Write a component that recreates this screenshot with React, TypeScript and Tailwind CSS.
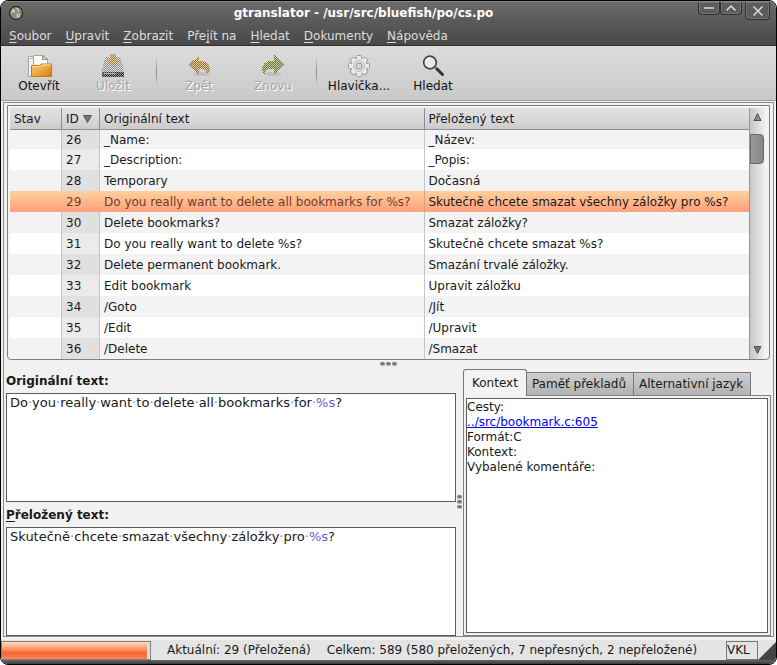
import { useId, useState, type ReactNode } from 'react';

const menus: [string, string, string][] = [
  ['', 'S', 'oubor'],
  ['', 'U', 'pravit'],
  ['', 'Z', 'obrazit'],
  ['Pře', 'j', 'ít na'],
  ['', 'H', 'ledat'],
  ['', 'D', 'okumenty'],
  ['', 'N', 'ápověda'],
];

const rows = [
  { id: 26, source: '_Name:', target: '_Název:' },
  { id: 27, source: '_Description:', target: '_Popis:' },
  { id: 28, source: 'Temporary', target: 'Dočasná' },
  {
    id: 29,
    source: 'Do you really want to delete all bookmarks for %s?',
    target: 'Skutečně chcete smazat všechny záložky pro %s?',
  },
  { id: 30, source: 'Delete bookmarks?', target: 'Smazat záložky?' },
  { id: 31, source: 'Do you really want to delete %s?', target: 'Skutečně chcete smazat %s?' },
  { id: 32, source: 'Delete permanent bookmark.', target: 'Smazání trvalé záložky.' },
  { id: 33, source: 'Edit bookmark', target: 'Upravit záložku' },
  { id: 34, source: '/Goto', target: '/Jít' },
  { id: 35, source: '/Edit', target: '/Upravit' },
  { id: 36, source: '/Delete', target: '/Smazat' },
];

function AppIcon() {
  return (
    <svg viewBox="0 0 16 16" className="size-4" aria-hidden="true">
      <circle cx="8" cy="8" r="6.6" fill="#6f7f6a" stroke="#2c2f28" strokeWidth="1.2" />
      <circle cx="8" cy="8" r="5.4" fill="#84957e" />
      <path d="M3.600 8 5.200 4l1.800 3.600M4.400 6.600h2.200" fill="none" stroke="#d5dccf" />
      <path d="M8.200 3.800h2.200v2.800M9.200 9.200h2.400M9.200 9v3h2.200v-1.600" fill="none" stroke="#d5dccf" />
    </svg>
  );
}

function OpenIcon() {
  return (
    <svg viewBox="0 0 26 24" className="h-6 w-[26px]" aria-hidden="true">
      <defs>
        <linearGradient id="folder" x1="0" y1="0" x2="1" y2="1">
          <stop offset="0" stopColor="#f7c777" />
          <stop offset="0.4" stopColor="#f0b04a" />
          <stop offset="1" stopColor="#d9760c" />
        </linearGradient>
      </defs>
      <path d="M2.500 2.500h7v20h-7z" fill="#f2f2f2" stroke="#a6a6a6" />
      <path d="M4 4.500h3" stroke="#efab50" />
      <path d="M7.500 1.500h9l5 4v9h-14z" fill="#fbfbfb" stroke="#a6a6a6" />
      <path d="M16.500 1.500v4h5z" fill="#e2e2e2" stroke="#8f8f8f" />
      <path d="M5.500 11.500h8l1.500-1.500h10.500v12.500h-20z" fill="url(#folder)" stroke="#cf7612" />
      <path d="M6 12.500h8l1.500-1.500H25" fill="none" stroke="#fbdf9e" />
    </svg>
  );
}

function SaveIcon() {
  return (
    <svg viewBox="0 0 24 24" className="size-6" shapeRendering="crispEdges" aria-hidden="true">
      <defs>
        <pattern id="dither-grey" width="2" height="2" patternUnits="userSpaceOnUse">
          <rect width="2" height="2" fill="#e0e0e0" />
          <path d="M0 0h1v1H0zM1 1h1v1H1z" fill="#8c8c8c" />
        </pattern>
        <pattern id="dither-dark" width="2" height="2" patternUnits="userSpaceOnUse">
          <rect width="2" height="2" fill="#9a9a9a" />
          <path d="M0 0h1v1H0zM1 1h1v1H1z" fill="#2b2b2b" />
        </pattern>
        <pattern id="dither-gold" width="2" height="2" patternUnits="userSpaceOnUse">
          <rect width="2" height="2" fill="#dcd5c2" />
          <path d="M0 0h1v1H0zM1 1h1v1H1z" fill="#a87a2a" />
        </pattern>
      </defs>
      <path d="M5 3h14l2 5 2 9v6H1v-6l2-9z" fill="url(#dither-grey)" />
      <path d="M1 18h22v5H1z" fill="url(#dither-dark)" />
      <path d="M3 19h11v1H3z" fill="#b5b5b5" />
      <path d="M9 0h6v6h4l-7 7-7-7h4z" fill="url(#dither-gold)" />
    </svg>
  );
}

function UndoIcon() {
  return (
    <svg viewBox="0 0 24 24" className="size-6" shapeRendering="crispEdges" aria-hidden="true">
      <defs>
        <pattern id="dither-undo" width="2" height="2" patternUnits="userSpaceOnUse">
          <rect width="2" height="2" fill="#d9cfae" />
          <path d="M0 0h1v1H0zM1 1h1v1H1z" fill="#95702a" />
        </pattern>
      </defs>
      <ellipse cx="15" cy="20" rx="8" ry="2.500" fill="#c0c0c0" />
      <path d="M1 11 12 2v5h3c5 0 8 4 8 9l-3 5c0-4-2-6-5-6h-3v5z" fill="url(#dither-undo)" />
    </svg>
  );
}

function RedoIcon() {
  return (
    <svg viewBox="0 0 24 24" className="size-6" shapeRendering="crispEdges" aria-hidden="true">
      <defs>
        <pattern id="dither-redo" width="2" height="2" patternUnits="userSpaceOnUse">
          <rect width="2" height="2" fill="#c9d1a8" />
          <path d="M0 0h1v1H0zM1 1h1v1H1z" fill="#667337" />
        </pattern>
      </defs>
      <ellipse cx="12" cy="20" rx="8" ry="2.500" fill="#c0c0c0" />
      <path d="M23 10 13 1v6H9c-5 0-8 4-8 9l3 5c0-4 2-6 5-6h4v5z" fill="url(#dither-redo)" />
    </svg>
  );
}

function GearIcon() {
  const teeth = [0, 45, 90, 135, 180, 225, 270, 315];
  return (
    <svg viewBox="0 0 24 24" className="size-6" aria-hidden="true">
      {teeth.map((angle) => (
        <rect
          key={angle}
          x="9.500"
          y="1.500"
          width="5"
          height="6"
          rx="1"
          fill="#ebebeb"
          stroke="#9a9a9a"
          transform={`rotate(${angle} 12 12)`}
        />
      ))}
      <circle cx="12" cy="12" r="8.300" fill="#e6e6e6" stroke="#a0a0a0" />
      {teeth.map((angle) => (
        <rect
          key={angle}
          x="10"
          y="2.500"
          width="4"
          height="4"
          fill="#ebebeb"
          transform={`rotate(${angle} 12 12)`}
        />
      ))}
      <circle cx="12" cy="12" r="5.500" fill="#dcdcdc" stroke="#c0c0c0" />
      <circle cx="12" cy="12" r="3" fill="#d6d6d6" stroke="#9a9a9a" />
    </svg>
  );
}

function SearchIcon() {
  return (
    <svg viewBox="0 0 24 24" className="size-6" aria-hidden="true">
      <path d="M14 13l3 3" stroke="#777" strokeWidth="2" />
      <path d="M16 15l5.500 5.500" stroke="#333" strokeWidth="3" strokeLinecap="round" />
      <circle cx="9" cy="8.500" r="6.300" fill="#e4e8ea" stroke="#444" strokeWidth="1.700" />
      <path d="M5 8a4 4 0 0 1 4-4" fill="none" stroke="#fff" strokeWidth="1.500" />
    </svg>
  );
}

function ToolButton({ label, disabled, children }: { label: string; disabled?: boolean; children: ReactNode }) {
  return (
    <button
      type="button"
      disabled={disabled}
      className="flex w-[74px] flex-col items-center whitespace-nowrap pt-2 leading-4 text-[#111] disabled:text-[#a5a5a5] disabled:[text-shadow:1px_1px_0_#fff]"
    >
      {children}
      {label}
    </button>
  );
}

function ToolSeparator() {
  return (
    <div className="flex w-3 justify-center pt-3">
      <div className="h-7 w-px bg-linear-to-b from-[#ccc] via-[#888] to-[#ccc]" />
    </div>
  );
}

function Highlighted({ text }: { text: string }) {
  return text.split(/( |%s)/).map((part, i) => {
    if (part === ' ') return <span key={i} className="text-[#888]">·</span>;
    if (part === '%s') return <span key={i} className="text-[#6a5acd]">%s</span>;
    return <span key={i}>{part}</span>;
  });
}

function Editor({ label, initial, className }: { label: ReactNode; initial: string; className: string }) {
  const [text, setText] = useState(initial);
  const id = useId();
  return (
    <div className={`flex flex-col ${className}`}>
      <label htmlFor={id} className="flex h-[25px] items-center font-bold">
        <span>{label}</span>
      </label>
      <div className="grid grow border border-[#5c5c5c] bg-white text-[13px] leading-4">
        <div aria-hidden="true" className="col-start-1 row-start-1 whitespace-pre-wrap px-[3px] pt-px">
          <Highlighted text={text} />
        </div>
        <textarea
          id={id}
          value={text}
          onChange={(e) => setText(e.target.value)}
          spellCheck={false}
          className="col-start-1 row-start-1 resize-none bg-transparent px-[3px] pt-px text-transparent caret-black outline-none"
        />
      </div>
    </div>
  );
}

function Grip({ vertical }: { vertical?: boolean }) {
  return (
    <div className={`flex items-center justify-center gap-px ${vertical ? 'w-[7px] flex-col' : 'h-2'}`}>
      {[0, 1, 2].map((n) => (
        <span key={n} className="h-1 w-[5px] rounded-full border-b border-[#bbb] bg-[#777]" />
      ))}
    </div>
  );
}

function WindowButton({ label, path, className }: { label: string; path: string; className: string }) {
  return (
    <button
      type="button"
      aria-label={label}
      className={`flex items-center justify-center rounded-b border border-t-0 border-[#2e2e2e] bg-[#5c5c5c] shadow-[inset_0_0_0_1px_#747474] ${className}`}
    >
      <svg viewBox="0 0 12 12" className="size-3" aria-hidden="true">
        <path d={path} fill="none" stroke="#d8d8d8" strokeWidth="1.600" />
      </svg>
    </button>
  );
}

export default function App() {
  const [selected, setSelected] = useState(29);
  const [tab, setTab] = useState('Kontext');
  return (
    <div className="flex min-h-screen flex-col bg-white font-['DejaVu_Sans',sans-serif] text-xs text-[#1a1a1a]">
      <div className="flex grow flex-col overflow-hidden rounded-lg border border-black bg-[#f1f1f1]">
        <header className="border-b border-[#303030] bg-linear-to-b from-[#6b6b6b] to-[#484848] text-[#ddd]">
          <div className="flex h-6 items-start border-t border-[#858585]">
            <div className="flex w-7 items-center pt-[3px] pl-[7px]">
              <AppIcon />
            </div>
            <h1 className="grow pt-[3px] text-center font-bold leading-4 text-white">
              gtranslator - /usr/src/bluefish/po/cs.po
            </h1>
            <div className="flex w-[78px] items-start">
              <WindowButton label="Minimalizovat" path="M1 6h10" className="h-[13px] w-[22px]" />
              <WindowButton label="Maximalizovat" path="M1.500 8.500 6 4l4.500 4.500" className="h-[13px] w-[22px]" />
              <WindowButton label="Zavřít" path="M1.500 1.500l9 9M10.500 1.500l-9 9" className="ml-[3px] h-[18px] w-[25px]" />
            </div>
          </div>
          <nav className="flex h-5 gap-[14px] pt-px pl-2">
            {menus.map(([before, key, after]) => (
              <button key={key} type="button" className="whitespace-nowrap leading-5">
                {before}
                <span className="underline underline-offset-2">{key}</span>
                {after}
              </button>
            ))}
          </nav>
        </header>

        <div className="flex h-[55px] border-b border-[#9a9a9a] bg-linear-to-b from-[#dcdcdc] to-[#c9c9c9] pl-px">
          <ToolButton label="Otevřít"><OpenIcon /></ToolButton>
          <ToolButton label="Uložit" disabled><SaveIcon /></ToolButton>
          <ToolSeparator />
          <ToolButton label="Zpět" disabled><UndoIcon /></ToolButton>
          <ToolButton label="Znovu" disabled><RedoIcon /></ToolButton>
          <ToolSeparator />
          <ToolButton label="Hlavička..."><GearIcon /></ToolButton>
          <ToolButton label="Hledat"><SearchIcon /></ToolButton>
        </div>

        <main className="mx-[2px] mt-px mb-[3px] flex grow flex-col border border-[#8a8a8a] bg-[#f1f1f1]">
          <div className="mx-[3px] mt-[2px] flex rounded-b border border-[#808080] bg-[#f3f3f3] pt-[2px] pr-1 pl-[2px]">
            <table className="w-full table-fixed border-separate border-spacing-0">
              <colgroup>
                <col className="w-[52px]" />
                <col className="w-[38px]" />
                <col />
                <col />
              </colgroup>
              <thead>
                <tr className="h-[22px] bg-linear-to-b from-[#e2e2e2] via-[#d9d9d9] to-[#cacaca] text-left">
                  <th className="border-r border-b border-[#8f8f8f] px-1 pt-px pb-0 font-normal">Stav</th>
                  <th className="border-r border-b border-[#8f8f8f] pt-px pb-0 pl-1 font-normal">
                    <span className="flex items-center gap-1">
                      ID
                      <svg viewBox="0 0 9 8" className="h-2 w-[9px]" aria-hidden="true">
                        <path d="M.5.5h8L4.500 7.500z" fill="#777" stroke="#555" />
                      </svg>
                    </span>
                  </th>
                  <th className="border-r border-b border-[#8f8f8f] px-1 pt-px pb-0 font-normal">Originální text</th>
                  <th className="border-b border-[#8f8f8f] px-1 pt-px pb-0 font-normal">Přeložený text</th>
                </tr>
              </thead>
              <tbody>
                {rows.map((row) => {
                  const active = row.id === selected;
                  return (
                    <tr
                      key={row.id}
                      onClick={() => setSelected(row.id)}
                      className={`h-[21px] whitespace-nowrap first:h-[19px] ${
                        active
                          ? 'bg-linear-to-b from-[#ffd09c] to-[#ff9f7c]'
                          : 'bg-white odd:bg-[#f3f3f3]'
                      }`}
                    >
                      <td className={`border-r p-0 ${active ? 'border-transparent' : 'border-[#c4c4c4]'}`} />
                      <td
                        className={`border-r py-0 px-1 ${
                          active ? 'border-transparent text-[#6b4030]' : 'border-[#c4c4c4] bg-black/8'
                        }`}
                      >
                        {row.id}
                      </td>
                      <td
                        className={`border-r py-0 px-1 ${
                          active ? 'border-[#e0a080] text-[#6b4030]' : 'border-[#c4c4c4]'
                        }`}
                      >
                        {row.source}
                      </td>
                      <td className="py-0 px-1">{row.target}</td>
                    </tr>
                  );
                })}
              </tbody>
            </table>
            <div className="flex w-4 shrink-0 flex-col items-center border-l border-[#999] bg-linear-to-r from-[#c6c6c6] to-[#f0f0f0]">
              <svg viewBox="0 0 9 8" className="mt-[5px] h-2 w-[9px]" aria-hidden="true">
                <path d="M4.500.5l3.500 7H1z" fill="#888" stroke="#555" />
              </svg>
              <div className="mt-[13px] mr-px h-[30px] w-[14px] rounded-r-sm border border-[#6a6a6a] bg-linear-to-r from-[#999] to-[#868686]" />
              <svg viewBox="0 0 9 8" className="mt-auto mb-[5px] h-2 w-[9px]" aria-hidden="true">
                <path d="M1 .5h7l-3.500 7z" fill="#777" stroke="#555" />
              </svg>
            </div>
          </div>

          <Grip />

          <div className="flex grow pl-[2px]">
            <div className="flex grow basis-0 flex-col">
              <Editor label="Originální text:" initial={rows[3].source} className="h-[134px]" />
              <Editor
                label={<><span className="underline underline-offset-2">P</span>řeložený text:</>}
                initial={rows[3].target}
                className="grow"
              />
            </div>
            <Grip vertical />
            <section className="mr-[2px] flex w-[308px] flex-col">
              <div role="tablist" className="flex h-[27px] items-end">
                {['Kontext', 'Paměť překladů', 'Alternativní jazyk'].map((name) => (
                  <button
                    key={name}
                    type="button"
                    role="tab"
                    aria-selected={tab === name}
                    onClick={() => setTab(name)}
                    className={`whitespace-nowrap border border-b-0 border-[#777] ${
                      tab === name
                        ? 'z-10 -mb-px h-[27px] rounded-t-[3px] bg-[#f3f3f3] px-2'
                        : 'h-[23px] border-l-0 bg-linear-to-b from-[#cecece] to-[#b2b2b2] pr-[7px] pl-[5px]'
                    }`}
                  >
                    {name}
                  </button>
                ))}
              </div>
              <div role="tabpanel" className="flex grow flex-col border border-[#808080] bg-[#f1f1f1] p-[2px]">
                <div className="grow border border-[#5c5c5c] bg-white pt-px leading-[15px]">
                  <p>Cesty:</p>
                  <p><a href="#bookmark" className="text-[#0000ee] underline">../src/bookmark.c:605</a></p>
                  <p>Formát:C</p>
                  <p>Kontext:</p>
                  <p>Vybalené komentáře:</p>
                </div>
              </div>
            </section>
          </div>
        </main>

        <footer className="flex h-5 items-center bg-[#e4e4e4]">
          <div
            role="progressbar"
            aria-label="Průběh"
            aria-valuenow={97}
            className="h-[19px] w-[150px] border border-[#808080] bg-[#ddd] pr-[3px]"
          >
            <div className="h-full bg-linear-to-b from-[#ffdcc0] via-[#f4662f] via-65% to-[#ff8552]" />
          </div>
          <span className="ml-4">Aktuální: 29 (Přeložená)</span>
          <span className="ml-4">Celkem: 589 (580 přeložených, 7 nepřesných, 2 nepřeložené)</span>
          <span className="ml-auto flex h-[19px] w-8 items-center border border-[#777]">VKL</span>
          <svg viewBox="0 0 18 20" className="h-5 w-[18px]" aria-hidden="true">
            <path d="M18 2v18H0z" fill="#444" />
          </svg>
        </footer>
        <div className="h-1 bg-linear-to-b from-[#666] to-[#3a3a3a]" />
      </div>
    </div>
  );
}
